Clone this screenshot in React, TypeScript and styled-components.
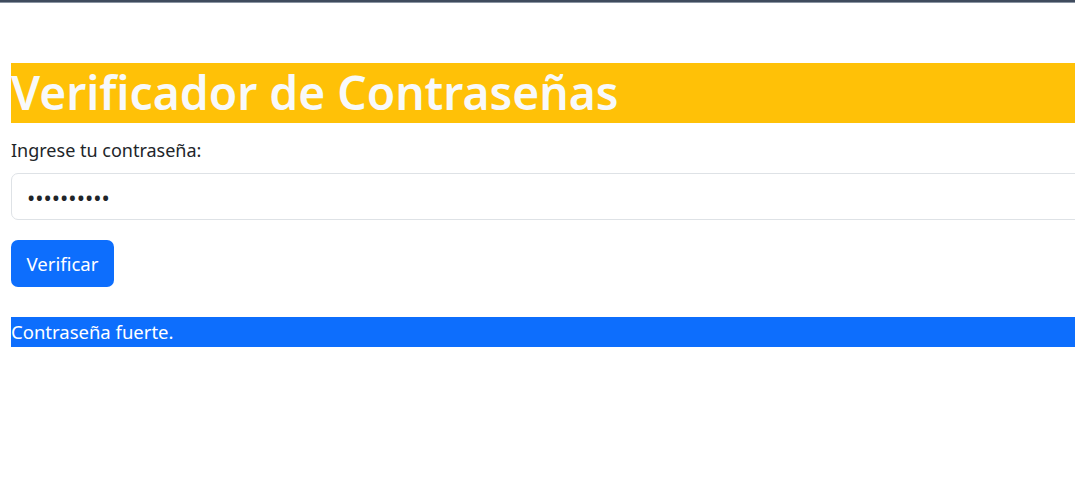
import React from "react";
import styled, { createGlobalStyle } from "styled-components";

const Global = createGlobalStyle`
  html, body { margin: 0; padding: 0; background: #fff; }
  body {
    font-family: "Noto Sans", "Open Sans", sans-serif;
    color: #212529;
    overflow: hidden;
  }
  * { box-sizing: border-box; }
`;

const TopBar = styled.div`
  height: 3px;
  background: #3f4b5d;
  border-bottom: 1px solid #8b95a3;
`;

const Page = styled.main`
  width: 1200px;
  padding: 60px 0 0 11px;
  display: flex;
  flex-direction: column;
`;

const Title = styled.h1`
  margin: 0;
  height: 60px;
  line-height: 60px;
  background: #ffc107;
  color: #f8f9fa;
  font-size: 46.2px;
  font-weight: 600;
  white-space: nowrap;
`;

const Form = styled.form`
  display: flex;
  flex-direction: column;
  padding-top: 15px;
`;

const Label = styled.label`
  font-size: 18px;
  line-height: 24px;
  margin-bottom: 11px;
`;

const Input = styled.input`
  height: 47px;
  border: 1px solid #dee2e6;
  border-radius: 7px;
  padding: 0 15px;
  font-size: 22px;
  color: #212529;
  font-family: inherit;
  outline: none;
`;

const Button = styled.button`
  align-self: flex-start;
  margin-top: 20px;
  height: 47px;
  padding: 0 15.5px;
  border: none;
  border-radius: 7px;
  background: #0d6efd;
  color: #fff;
  font-family: inherit;
  font-size: 18.6px;
`;

const Alert = styled.div`
  margin-top: 30px;
  height: 30px;
  line-height: 30px;
  background: #0d6efd;
  color: #fff;
  font-size: 18.5px;
`;

export default function App() {
  return (
    <>
      <Global />
      <TopBar />
      <Page>
        <Title>Verificador de Contraseñas</Title>
        <Form onSubmit={(e) => e.preventDefault()}>
          <Label htmlFor="pw">Ingrese tu contraseña:</Label>
          <Input id="pw" type="password" defaultValue="abcdefghij" readOnly />
          <Button type="submit">Verificar</Button>
        </Form>
        <Alert>Contraseña fuerte.</Alert>
      </Page>
    </>
  );
}
